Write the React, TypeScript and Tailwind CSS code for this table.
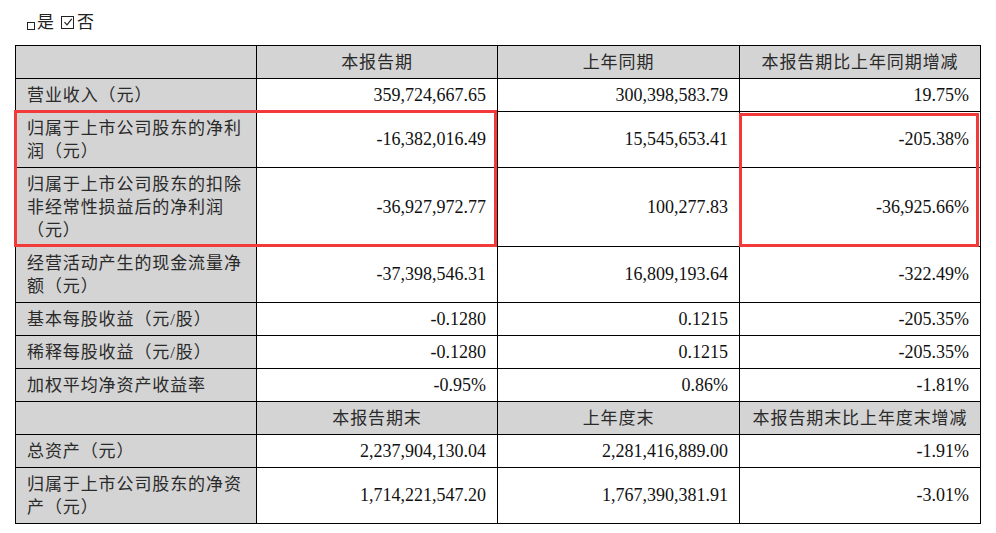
type Row = {
  label: string[];
  values: [string, string, string];
  head?: boolean;
};

const rows: Row[] = [
  { label: [""], values: ["本报告期", "上年同期", "本报告期比上年同期增减"], head: true },
  { label: ["营业收入（元）"], values: ["359,724,667.65", "300,398,583.79", "19.75%"] },
  {
    label: ["归属于上市公司股东的净利", "润（元）"],
    values: ["-16,382,016.49", "15,545,653.41", "-205.38%"],
  },
  {
    label: ["归属于上市公司股东的扣除", "非经常性损益后的净利润", "（元）"],
    values: ["-36,927,972.77", "100,277.83", "-36,925.66%"],
  },
  {
    label: ["经营活动产生的现金流量净", "额（元）"],
    values: ["-37,398,546.31", "16,809,193.64", "-322.49%"],
  },
  { label: ["基本每股收益（元/股）"], values: ["-0.1280", "0.1215", "-205.35%"] },
  { label: ["稀释每股收益（元/股）"], values: ["-0.1280", "0.1215", "-205.35%"] },
  { label: ["加权平均净资产收益率"], values: ["-0.95%", "0.86%", "-1.81%"] },
  { label: [""], values: ["本报告期末", "上年度末", "本报告期末比上年度末增减"], head: true },
  { label: ["总资产（元）"], values: ["2,237,904,130.04", "2,281,416,889.00", "-1.91%"] },
  {
    label: ["归属于上市公司股东的净资", "产（元）"],
    values: ["1,714,221,547.20", "1,767,390,381.91", "-3.01%"],
  },
];

const font = { fontFamily: '"Liberation Serif", "Noto Sans CJK SC", serif' };

export default function App() {
  return (
    <div className="w-[996px] h-[533px] bg-white text-[#1c1c1c]" style={font}>
      <div className="flex items-center h-[45px] pl-[27px] pt-[1px] text-[17px] text-[#222]">
        <span className="inline-block w-[8px] h-[8px] border border-[#222] mt-[5px]" />
        <span className="ml-[2px]">是</span>
        <span className="ml-[7px] inline-flex items-center justify-center w-[13px] h-[13px] border border-[#222] -mt-[2px]">
          <svg width="10" height="10" viewBox="0 0 10 10">
            <path d="M1.5 5.2 L4 7.8 L8.8 1.8" fill="none" stroke="#222" strokeWidth="1.2" />
          </svg>
        </span>
        <span className="ml-[3px]">否</span>
      </div>

      <div className="relative ml-[15px] w-[965px]">
        <table className="table-fixed border-collapse w-[965px]">
          <colgroup>
            <col className="w-[241px]" />
            <col className="w-[241px]" />
            <col className="w-[242px]" />
            <col className="w-[241px]" />
          </colgroup>
          <tbody>
            {rows.map((r, i) => (
              <tr key={i}>
                <td className="border border-black bg-[#d4d4d4] pl-[11px] pr-[6px] py-[4.5px] align-middle text-[17px] leading-[23px] tracking-[0.9px] text-[#2a2a2a]">
                  {r.label.map((l, j) => (
                    <div key={j} className="whitespace-nowrap">
                      {l || "\u00a0"}
                    </div>
                  ))}
                </td>
                {r.values.map((v, j) =>
                  r.head ? (
                    <td
                      key={j}
                      className="border border-black bg-[#d4d4d4] py-[4.5px] text-center text-[17px] leading-[23px] tracking-[0.9px] text-[#2a2a2a]"
                    >
                      {v}
                    </td>
                  ) : (
                    <td
                      key={j}
                      className="border border-black py-[4.5px] pr-[11px] text-right text-[18px] leading-[23px] text-[#111]"
                    >
                      {v}
                    </td>
                  )
                )}
              </tr>
            ))}
          </tbody>
        </table>

        <div className="absolute left-[-1px] top-[65px] w-[483px] h-[137px] border-[3px] border-[#f23a3a]" />
        <div className="absolute left-[724px] top-[68px] w-[240px] h-[134px] border-[3px] border-[#f23a3a]" />
      </div>
    </div>
  );
}
